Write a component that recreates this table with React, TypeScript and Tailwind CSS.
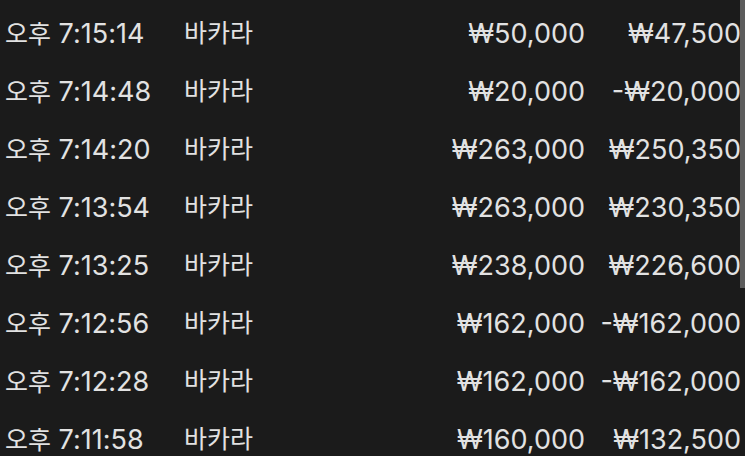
const rows = [
  { time: '7:15:14', game: '바카라', bet: '₩50,000', payout: '₩47,500' },
  { time: '7:14:48', game: '바카라', bet: '₩20,000', payout: '-₩20,000' },
  { time: '7:14:20', game: '바카라', bet: '₩263,000', payout: '₩250,350' },
  { time: '7:13:54', game: '바카라', bet: '₩263,000', payout: '₩230,350' },
  { time: '7:13:25', game: '바카라', bet: '₩238,000', payout: '₩226,600' },
  { time: '7:12:56', game: '바카라', bet: '₩162,000', payout: '-₩162,000' },
  { time: '7:12:28', game: '바카라', bet: '₩162,000', payout: '-₩162,000' },
  { time: '7:11:58', game: '바카라', bet: '₩160,000', payout: '₩132,500' },
]

export default function App() {
  return (
    <div className="relative w-[745px] h-[456px] overflow-hidden bg-[#1b1b1b] text-[#e2e2e2] text-[27px] [font-family:Inter,'Noto_Sans_CJK_KR',sans-serif]">
      <div className="pt-[5px]">
        {rows.map((r, i) => (
          <div key={i} className="flex items-center h-[58px]">
            <span className="w-[184px] pl-[5px] shrink-0 whitespace-nowrap">
              <span className="text-[25px]">오후</span> {r.time}
            </span>
            <span className="w-[215px] shrink-0 whitespace-nowrap text-[25px]">{r.game}</span>
            <span className="w-[186px] shrink-0 text-right whitespace-nowrap">{r.bet}</span>
            <span className="w-[156px] shrink-0 text-right whitespace-nowrap">{r.payout}</span>
          </div>
        ))}
      </div>
      {/* scrollbar */}
      <div className="absolute right-0 top-0 w-[5px] h-[288px] bg-[#5c5c5c]" />
    </div>
  )
}
